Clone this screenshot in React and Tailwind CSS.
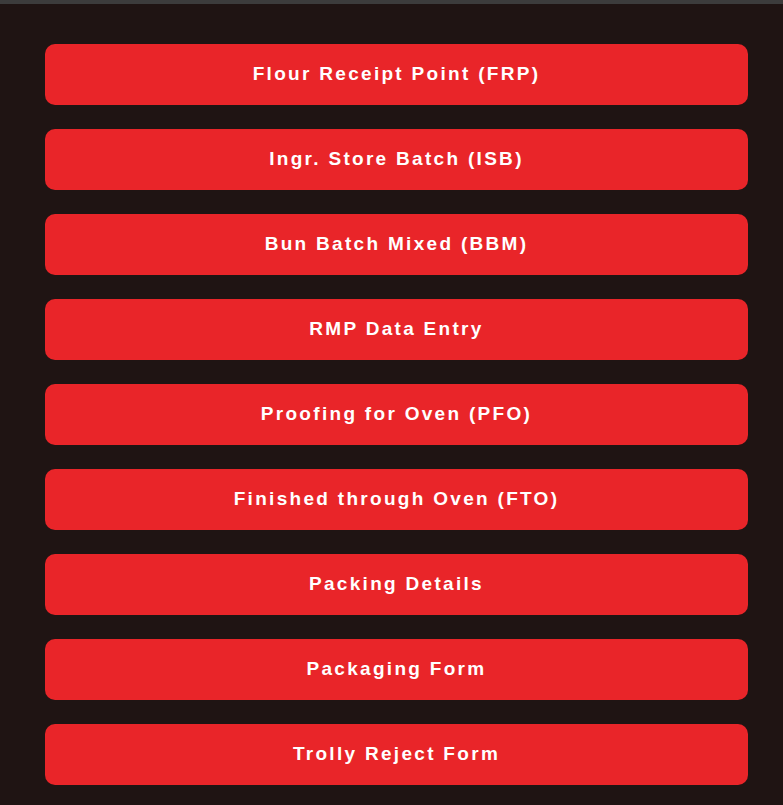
import React from 'react';

const items = [
  'Flour Receipt Point (FRP)',
  'Ingr. Store Batch (ISB)',
  'Bun Batch Mixed (BBM)',
  'RMP Data Entry',
  'Proofing for Oven (PFO)',
  'Finished through Oven (FTO)',
  'Packing Details',
  'Packaging Form',
  'Trolly Reject Form',
];

const App = () => {
  return (
    <div className="min-h-screen bg-[#1f1413]" style={{ fontFamily: '"Liberation Sans", Arial, sans-serif' }}>
      {/* Top strip */}
      <div className="h-1 bg-[#3c3c3c]"></div>

      {/* Menu */}
      <div className="flex flex-col gap-[24px] pl-[45px] pr-[35px] pt-[40px]">
        {items.map((label) => (
          <button
            key={label}
            className="h-[61px] w-full rounded-[10px] bg-[#e92529] text-white text-[19px] font-bold tracking-[2.3px] flex items-center justify-center"
          >
            {label}
          </button>
        ))}
      </div>
    </div>
  );
};

export default App;
